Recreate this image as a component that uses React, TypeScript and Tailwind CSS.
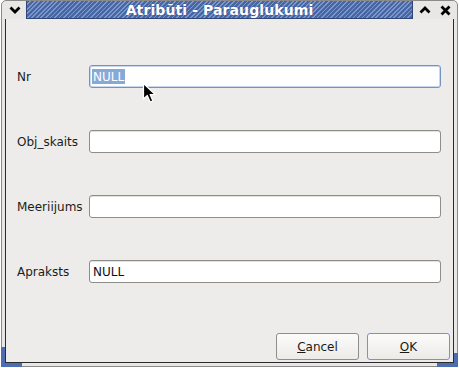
const Chevron = ({ up }: { up?: boolean }) => (
  <svg width="12" height="8" viewBox="0 0 12 8" className="block">
    <polyline
      points={up ? '1.5,6.5 6,2 10.5,6.5' : '1.5,1.5 6,6 10.5,1.5'}
      fill="none"
      stroke="#000"
      strokeWidth="2.8"
    />
  </svg>
);

const Close = () => (
  <svg width="11" height="11" viewBox="0 0 11 11" className="block">
    <path d="M1.5 1.5 L9.5 9.5 M9.5 1.5 L1.5 9.5" stroke="#000" strokeWidth="2.8" />
  </svg>
);

const Pointer = () => (
  <svg width="17" height="22" viewBox="0 0 17 22" className="absolute left-[142px] top-[82px]">
    <path
      d="M1.5 1.5 L1.5 17 L5.3 13.4 L8.2 20 L10.9 18.9 L8.1 12.5 L13.2 12.5 Z"
      fill="#000"
      stroke="#fff"
      strokeWidth="1.2"
      strokeLinejoin="round"
    />
  </svg>
);

const Field = ({
  label,
  value,
  focused,
}: {
  label: string;
  value?: string;
  focused?: boolean;
}) => (
  <div className="flex h-[23px] items-center">
    <span className="w-[72px] text-[12px] text-[#1c1c1c]">{label}</span>
    <div
      className={`flex h-[23px] w-[352px] items-center rounded-[3px] border bg-white pl-[2px] text-[12px] ${
        focused ? 'border-[#7592c4] shadow-[inset_0_0_0_1px_#c9d8ee]' : 'border-[#8e8d8a] shadow-[inset_0_1px_0_#e2e2e0]'
      }`}
    >
      {value &&
        (focused ? (
          <span className="flex h-[15px] items-center bg-[#86a9d8] px-[1px] leading-none text-white">{value}</span>
        ) : (
          <span className="px-[1px] text-[#111]">{value}</span>
        ))}
    </div>
  </div>
);

const DialogButton = ({ children, primary }: { children: React.ReactNode; primary?: boolean }) => (
  <button
    className={`flex h-[27px] w-[83px] items-center justify-center rounded-[3px] border bg-[linear-gradient(#fbfbfa,#ecebe8)] text-[12px] text-[#1a1a1a] ${
      primary ? 'border-[#7894c6]' : 'border-[#8f8e8b]'
    }`}
  >
    {children}
  </button>
);

export default function App() {
  return (
    <div className="relative h-[368px] w-[459px] bg-white font-['DejaVu_Sans',sans-serif]">
      <div className="relative ml-[1px] flex h-[367px] w-[457px] flex-col rounded-t-[5px] border border-[#8a8a8a] bg-[#e8e7e5]">
        {/* title bar */}
        <div className="flex h-[18px] shrink-0">
          <div className="flex w-[24px] items-center justify-center pl-[1px]">
            <Chevron />
          </div>
          <div className="flex flex-1 items-center justify-center border-x border-b border-[#2f4678] bg-[repeating-linear-gradient(135deg,#4666a4_0px,#4666a4_2px,#7d97cc_2px,#7d97cc_3.2px)]">
            <span className="text-[14px] font-bold leading-none tracking-[0.1px] text-white [text-shadow:0_0_2px_#34508a]">
              Atribūti - Parauglukumi
            </span>
          </div>
          <div className="flex w-[44px] items-center gap-[9px] pl-[6px]">
            <Chevron up />
            <Close />
          </div>
        </div>

        {/* client area */}
        <div className="mx-[3px] mb-[3px] flex flex-1 flex-col border-x border-b border-[#2b2b2b] bg-[#edecea]">
          <div className="relative flex flex-1 flex-col gap-[42px] pl-[11px] pt-[46px]">
            <Field label="Nr" value="NULL" focused />
            <Field label="Obj_skaits" />
            <Field label="Meeriijums" />
            <Field label="Apraksts" value="NULL" />
          </div>
          <div className="flex justify-end gap-[8px] pb-[2px] pr-[3px]">
            <DialogButton>
              <span className="underline">C</span>ancel
            </DialogButton>
            <DialogButton primary>
              <span className="underline">O</span>K
            </DialogButton>
          </div>
        </div>

        {/* resize grip accents */}
        <div className="absolute bottom-[-1px] left-[-1px] h-[20px] w-[21px] border-b-[4px] border-l-[4px] border-[#4d6db0]" />
        <div className="absolute bottom-[-1px] right-[-1px] h-[14px] w-[21px] border-b-[4px] border-r-[4px] border-[#4d6db0]" />
      </div>
      <Pointer />
    </div>
  );
}
